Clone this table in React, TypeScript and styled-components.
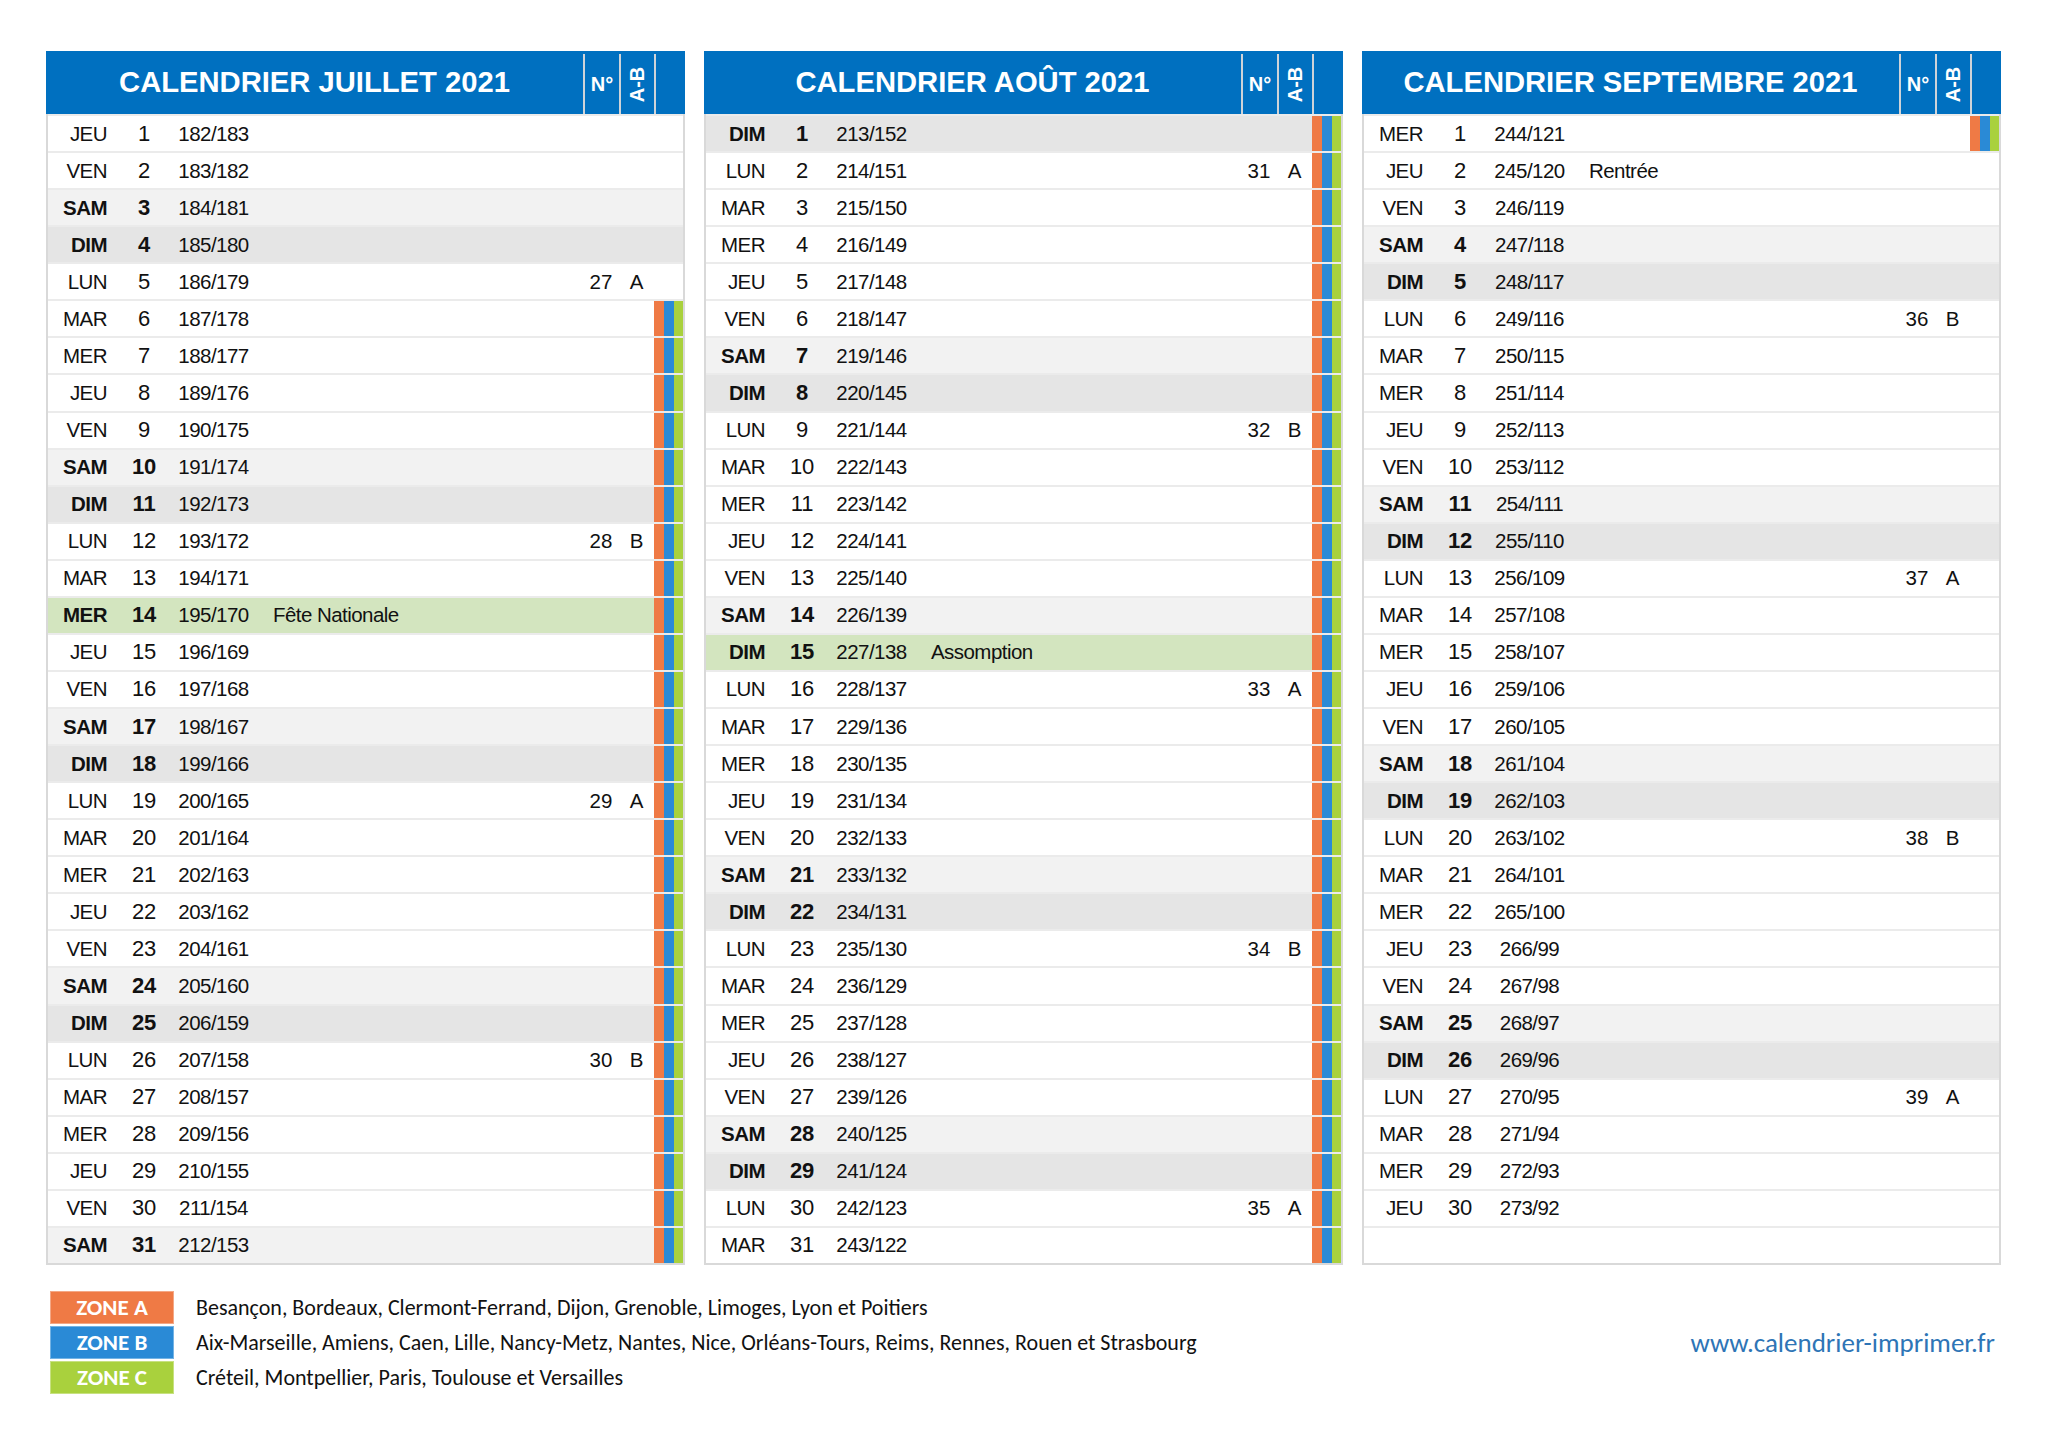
import React from 'react';
import styled, { createGlobalStyle } from 'styled-components';

const GlobalStyle = createGlobalStyle`
  html, body { margin: 0; padding: 0; background: #ffffff; }
  body { font-family: "Liberation Sans", Arial, sans-serif; color: #111; }
`;

const ORANGE = '#EF7A45';
const BLUE = '#2A8AD6';
const GREEN = '#A9D13D';

const Page = styled.div`
  width: 2048px;
  height: 1448px;
  box-sizing: border-box;
  padding: 51px 46px 0 46px;
  display: flex;
  flex-direction: column;
`;

const Panels = styled.div`
  display: grid;
  grid-template-columns: repeat(3, 639px);
  column-gap: 19px;
`;

const Panel = styled.section`
  display: flex;
  flex-direction: column;
`;

const Header = styled.div`
  display: grid;
  grid-template-columns: 537px 36px 35px 31px;
  height: 63px;
  background: #0070c0;
  color: #ffffff;
`;

const Title = styled.h2`
  margin: 0;
  display: flex;
  align-items: center;
  justify-content: center;
  font-family: "Liberation Sans", Arial, sans-serif;
  font-weight: 700;
  font-size: 29.2px;
`;

const HeadCell = styled.div`
  margin-top: 3px;
  border-left: 2px solid #cfd3d8;
  display: flex;
  align-items: center;
  justify-content: center;
  font-family: "Liberation Sans", Arial, sans-serif;
  font-weight: 700;
  font-size: 20px;
`;

const Vertical = styled.span`
  display: inline-block;
  transform: rotate(-90deg);
  white-space: nowrap;
`;

const Body = styled.div`
  border: 2px solid #d9d9d9;
  border-top: none;
`;

const Row = styled.div<{ $bg: string }>`
  display: grid;
  grid-template-columns: 74px 44px 95px 1fr 36px 35px 29px;
  height: 37.07px;
  box-sizing: border-box;
  border-top: 2px solid #ebebeb;
  background: ${(p) => p.$bg};
  font-family: "Liberation Sans", Arial, sans-serif;
  font-size: 20.5px;
  letter-spacing: -0.55px;
  align-items: center;
`;

const DayName = styled.span<{ $bold: boolean }>`
  text-align: right;
  padding-right: 15px;
  font-weight: ${(p) => (p.$bold ? 700 : 400)};
`;

const DayNum = styled.span<{ $bold: boolean }>`
  text-align: center;
  font-size: 22px;
  letter-spacing: -0.2px;
  font-weight: ${(p) => (p.$bold ? 700 : 400)};
`;

const Doy = styled.span`
  text-align: center;
`;

const Note = styled.span`
  padding-left: 12px;
  white-space: nowrap;
`;

const Week = styled.span`
  text-align: center;
  letter-spacing: 0;
`;

const StripeCell = styled.div`
  align-self: stretch;
  display: grid;
  grid-template-columns: 10px 10px 9px;
`;

const Stripe = styled.span<{ $color: string }>`
  background: ${(p) => p.$color};
`;

const Footer = styled.div`
  margin-top: 26px;
  padding-left: 4px;
  padding-right: 7px;
  display: flex;
  justify-content: space-between;
  align-items: center;
`;

const Zones = styled.div`
  display: grid;
  grid-template-columns: 124px auto;
  grid-auto-rows: 33px;
  row-gap: 2px;
  column-gap: 22px;
  align-items: center;
`;

const ZoneBox = styled.div<{ $color: string }>`
  height: 100%;
  background: ${(p) => p.$color};
  color: #ffffff;
  display: flex;
  align-items: center;
  justify-content: center;
  font-family: "Carlito", "Liberation Sans", sans-serif;
  font-weight: 700;
  font-size: 23px;
  box-sizing: border-box;
  border: 1px solid rgba(255, 255, 255, 0.35);
`;

const ZoneText = styled.span`
  font-family: "Carlito", "Liberation Sans", sans-serif;
  font-size: 22px;
  color: #111;
  white-space: nowrap;
`;

const Url = styled.span`
  font-family: "Carlito", "Liberation Sans", sans-serif;
  font-size: 27px;
  color: #2e75b6;
`;

const NAMES = ['DIM', 'LUN', 'MAR', 'MER', 'JEU', 'VEN', 'SAM'];

type DayInfo = {
  name: string;
  n: number;
  doy: number;
  rest: number;
  week?: number;
  ab?: string;
  note?: string;
  green: boolean;
  stripes: boolean;
};

function isoWeek(y: number, m: number, d: number): number {
  const dt = new Date(Date.UTC(y, m, d));
  const day = dt.getUTCDay() || 7;
  dt.setUTCDate(dt.getUTCDate() + 4 - day);
  const start = Date.UTC(dt.getUTCFullYear(), 0, 1);
  return Math.ceil(((dt.getTime() - start) / 86400000 + 1) / 7);
}

const HOLIDAYS: Record<string, { label: string; green: boolean }> = {
  '6-14': { label: 'Fête Nationale', green: true },
  '7-15': { label: 'Assomption', green: true },
  '8-2': { label: 'Rentrée', green: false },
};

function buildMonth(m: number, stripe: (d: number) => boolean): DayInfo[] {
  const y = 2021;
  const count = new Date(Date.UTC(y, m + 1, 0)).getUTCDate();
  const out: DayInfo[] = [];
  for (let d = 1; d <= count; d++) {
    const wd = new Date(Date.UTC(y, m, d)).getUTCDay();
    const doy = Math.round((Date.UTC(y, m, d) - Date.UTC(y, 0, 1)) / 86400000) + 1;
    const h = HOLIDAYS[`${m}-${d}`];
    const info: DayInfo = {
      name: NAMES[wd],
      n: d,
      doy,
      rest: 365 - doy,
      green: !!h?.green,
      note: h?.label,
      stripes: stripe(d),
    };
    if (wd === 1) {
      info.week = isoWeek(y, m, d);
      info.ab = info.week % 2 === 1 ? 'A' : 'B';
    }
    out.push(info);
  }
  return out;
}

const MONTHS = [
  { title: 'CALENDRIER JUILLET 2021', days: buildMonth(6, (d) => d >= 6) },
  { title: 'CALENDRIER AOÛT 2021', days: buildMonth(7, () => true) },
  { title: 'CALENDRIER SEPTEMBRE 2021', days: buildMonth(8, (d) => d === 1) },
];

function rowBg(day: DayInfo): string {
  if (day.green) return '#d3e5bf';
  if (day.name === 'SAM') return '#f2f2f2';
  if (day.name === 'DIM') return '#e5e5e5';
  return '#ffffff';
}

const DayRow: React.FC<{ day: DayInfo }> = ({ day }) => {
  const bold = day.name === 'SAM' || day.name === 'DIM' || day.green;
  return (
    <Row $bg={rowBg(day)}>
      <DayName $bold={bold}>{day.name}</DayName>
      <DayNum $bold={bold}>{day.n}</DayNum>
      <Doy>
        {day.doy}/{day.rest}
      </Doy>
      <Note>{day.note ?? ''}</Note>
      <Week>{day.week ?? ''}</Week>
      <Week>{day.ab ?? ''}</Week>
      <StripeCell>
        {day.stripes && (
          <>
            <Stripe $color={ORANGE} />
            <Stripe $color={BLUE} />
            <Stripe $color={GREEN} />
          </>
        )}
      </StripeCell>
    </Row>
  );
};

const EmptyRow: React.FC = () => (
  <Row $bg="#ffffff">
    <span />
  </Row>
);

const ZONES = [
  { label: 'ZONE A', color: ORANGE, text: 'Besançon, Bordeaux, Clermont-Ferrand, Dijon, Grenoble, Limoges, Lyon et Poitiers' },
  {
    label: 'ZONE B',
    color: BLUE,
    text: 'Aix-Marseille, Amiens, Caen, Lille, Nancy-Metz, Nantes, Nice, Orléans-Tours, Reims, Rennes, Rouen et Strasbourg',
  },
  { label: 'ZONE C', color: GREEN, text: 'Créteil, Montpellier, Paris, Toulouse et Versailles' },
];

export default function App() {
  return (
    <>
      <GlobalStyle />
      <Page>
        <Panels>
          {MONTHS.map((month) => (
            <Panel key={month.title}>
              <Header>
                <Title>{month.title}</Title>
                <HeadCell>N°</HeadCell>
                <HeadCell>
                  <Vertical>A-B</Vertical>
                </HeadCell>
                <HeadCell />
              </Header>
              <Body>
                {month.days.map((d) => (
                  <DayRow key={d.n} day={d} />
                ))}
                {Array.from({ length: 31 - month.days.length }).map((_, i) => (
                  <EmptyRow key={`e${i}`} />
                ))}
              </Body>
            </Panel>
          ))}
        </Panels>
        <Footer>
          <Zones>
            {ZONES.map((z) => (
              <React.Fragment key={z.label}>
                <ZoneBox $color={z.color}>{z.label}</ZoneBox>
                <ZoneText>{z.text}</ZoneText>
              </React.Fragment>
            ))}
          </Zones>
          <Url>www.calendrier-imprimer.fr</Url>
        </Footer>
      </Page>
    </>
  );
}
